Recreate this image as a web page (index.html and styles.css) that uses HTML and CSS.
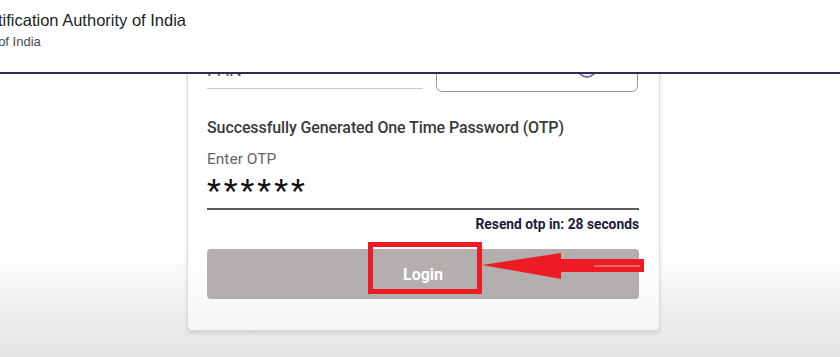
FILE: index.html
```html
<!DOCTYPE html>
<html>
<head>
  <meta charset="utf-8">
  <title>UIDAI Login</title>
  <meta name="viewport" content="width=device-width, initial-scale=1">
  <link rel="stylesheet" href="styles.css">
</head>
<body>

<div class="topbar">
  <div class="brand">
    <div class="brand-name">Unique Identification Authority of India</div>
    <div class="brand-sub">Government of India</div>
  </div>
</div>

<div class="page">
  <div class="card">
    <div class="pan-row">
      <div class="pan-field">
        <div class="pan-label">PAN</div>
      </div>
      <div class="captcha-box">
        <span class="refresh"></span>
      </div>
    </div>

    <div class="otp-msg">Successfully Generated One Time Password (OTP)</div>
    <div class="otp-label">Enter OTP</div>
    <div class="otp-input">******</div>
    <div class="resend">Resend otp in: 28 seconds</div>

    <div class="login-wrap">
      <button class="login-btn">Login</button>
      <div class="mark-box"></div>
      <svg class="mark-arrow" width="170" height="34" viewBox="0 0 170 34">
        <polygon points="0,16 79,4 79,10 162,10 162,23 79,23 79,30" fill="#ed1c24"/>
        <line x1="112" y1="17" x2="158" y2="17" stroke="#f4a9ac" stroke-width="1"/>
      </svg>
    </div>
  </div>
</div>

</body>
</html>
```

FILE: styles.css
```css
html, body {
  margin: 0;
  padding: 0;
  font-family: Roboto, 'Liberation Sans', sans-serif;
}
body {
  height: 357px;
  overflow: hidden;
  background: linear-gradient(to bottom, #fff 0, #fff 250px, #e3e3e3 357px);
}
.topbar {
  position: fixed;
  top: 0;
  left: 0;
  right: 0;
  height: 72px;
  background: white;
  border-bottom: 2px solid #2d2b58;
  z-index: 10;
  overflow: hidden;
}
.brand {
  margin-left: -91px;
  padding-top: 10px;
  font-family: 'Liberation Sans', Arial, sans-serif;
}
.brand-name {
  font-size: 16.5px;
  color: #1e1e1e;
  line-height: 20px;
}
.brand-sub {
  font-size: 13px;
  color: #4a4a4a;
  margin-top: 4px;
  margin-left: 14px;
}
.page {
  display: flex;
  justify-content: center;
  padding-left: 7px;
}
.card {
  width: 432px;
  margin-top: 20px;
  padding: 20px 20px 31px 19px;
  border: 1px solid #dcdcdc;
  border-radius: 6px;
  background: rgba(255,255,255,0.55);
  box-shadow: 0 2px 4px rgba(0,0,0,0.12);
}
.pan-row {
  display: grid;
  grid-template-columns: 216px 202px;
  column-gap: 13px;
  height: 51px;
}
.pan-field {
  display: flex;
  align-items: flex-end;
  border-bottom: 1px solid #c9c9c9;
  height: 47px;
}
.pan-label {
  font-size: 18px;
  color: #555;
  padding-bottom: 8px;
}
.captcha-box {
  border: 1px solid #9a9a9a;
  border-radius: 6px;
  display: flex;
  justify-content: flex-end;
  align-items: flex-start;
  padding-right: 40px;
}
.refresh {
  width: 16px;
  height: 16px;
  border: 2px solid #6f8096;
  border-radius: 50%;
  margin-top: 16px;
}
.otp-msg {
  margin-top: 26px;
  font-size: 16px;
  font-weight: 500;
  color: #3a3a3a;
  letter-spacing: -0.1px;
}
.otp-label {
  margin-top: 13px;
  font-size: 15.5px;
  color: #666;
}
.otp-input {
  font-size: 32px;
  letter-spacing: 3px;
  color: #111;
  line-height: 44px;
  height: 40px;
  border-bottom: 2px solid #5a5a5a;
}
.resend {
  text-align: right;
  margin-top: 6px;
  font-size: 13.8px;
  font-weight: 700;
  color: #1d1b3a;
}
.login-wrap {
  position: relative;
  margin-top: 17px;
}
.login-btn {
  display: block;
  width: 100%;
  height: 50px;
  border: none;
  border-radius: 4px;
  background-color: #b3afaf;
  color: white;
  font-family: Roboto, sans-serif;
  font-size: 16px;
  font-weight: 700;
}
.mark-box {
  position: absolute;
  left: 161px;
  top: -7px;
  width: 104px;
  height: 42px;
  border: 5px solid #ed1c24;
}
.mark-arrow {
  position: absolute;
  left: 275px;
  top: 0;
}
```
